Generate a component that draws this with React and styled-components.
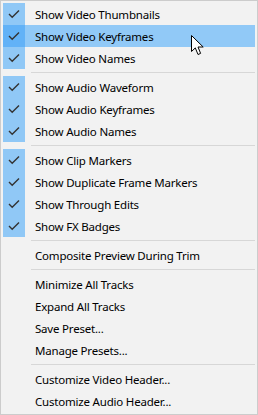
import React from "react";
import styled, { createGlobalStyle } from "styled-components";

const Global = createGlobalStyle`
  html, body {
    margin: 0;
    padding: 0;
    background: #f2f2f2;
  }
  body {
    font-family: "Noto Sans", "Open Sans", sans-serif;
  }
`;

const Menu = styled.div`
  position: relative;
  box-sizing: border-box;
  width: 258px;
  height: 415px;
  padding: 2px;
  background: #f2f2f2;
  border: 1px solid #cccccc;
  display: flex;
  flex-direction: column;
`;

const Row = styled.div`
  display: flex;
  height: 22px;
  align-items: stretch;
  background: ${(p) => (p.hot ? "#91c9f7" : "transparent")};
`;

const CheckCol = styled.div`
  width: 22px;
  display: flex;
  align-items: center;
  justify-content: center;
  background: ${(p) => (p.checked ? (p.hot ? "#62b2f7" : "#90c8f6") : "transparent")};
`;

const Label = styled.div`
  flex: 1;
  display: flex;
  align-items: center;
  padding-left: 10px;
  font-size: 11.5px;
  color: #000;
  white-space: nowrap;
  letter-spacing: -0.2px;
`;

const Sep = styled.div`
  height: 7px;
  display: flex;
  align-items: center;
  padding-left: 28px;
  &::after {
    content: "";
    flex: 1;
    height: 1px;
    background: #d7d7d7;
  }
`;

const Cursor = styled.svg`
  position: absolute;
  left: 190px;
  top: 34px;
`;

const Check = () => (
  <svg width="12" height="10" viewBox="0 0 12 10">
    <path d="M1 5 L4.2 8.2 L11 1.5" fill="none" stroke="#333" strokeWidth="1.4" />
  </svg>
);

const groups = [
  [
    { t: "Show Video Thumbnails", c: true },
    { t: "Show Video Keyframes", c: true, hot: true },
    { t: "Show Video Names", c: true },
  ],
  [
    { t: "Show Audio Waveform", c: true },
    { t: "Show Audio Keyframes", c: true },
    { t: "Show Audio Names", c: true },
  ],
  [
    { t: "Show Clip Markers", c: true },
    { t: "Show Duplicate Frame Markers", c: true },
    { t: "Show Through Edits", c: true },
    { t: "Show FX Badges", c: true },
  ],
  [{ t: "Composite Preview During Trim" }],
  [
    { t: "Minimize All Tracks" },
    { t: "Expand All Tracks" },
    { t: "Save Preset..." },
    { t: "Manage Presets..." },
  ],
  [{ t: "Customize Video Header..." }, { t: "Customize Audio Header..." }],
];

export default function App() {
  return (
    <>
      <Global />
      <Menu>
        {groups.map((g, gi) => (
          <React.Fragment key={gi}>
            {gi > 0 && <Sep />}
            {g.map((it) => (
              <Row key={it.t} hot={it.hot}>
                <CheckCol checked={it.c} hot={it.hot}>
                  {it.c && <Check />}
                </CheckCol>
                <Label>{it.t}</Label>
              </Row>
            ))}
          </React.Fragment>
        ))}
        <Cursor width="14" height="22" viewBox="0 0 14 22">
          <path
            d="M0.5 0.5 L0.5 16.5 L4.3 12.9 L7 19.5 L9.6 18.4 L7 12 L12.2 12 Z"
            fill="#fff"
            stroke="#000"
            strokeWidth="1"
            strokeLinejoin="miter"
          />
        </Cursor>
      </Menu>
    </>
  );
}
